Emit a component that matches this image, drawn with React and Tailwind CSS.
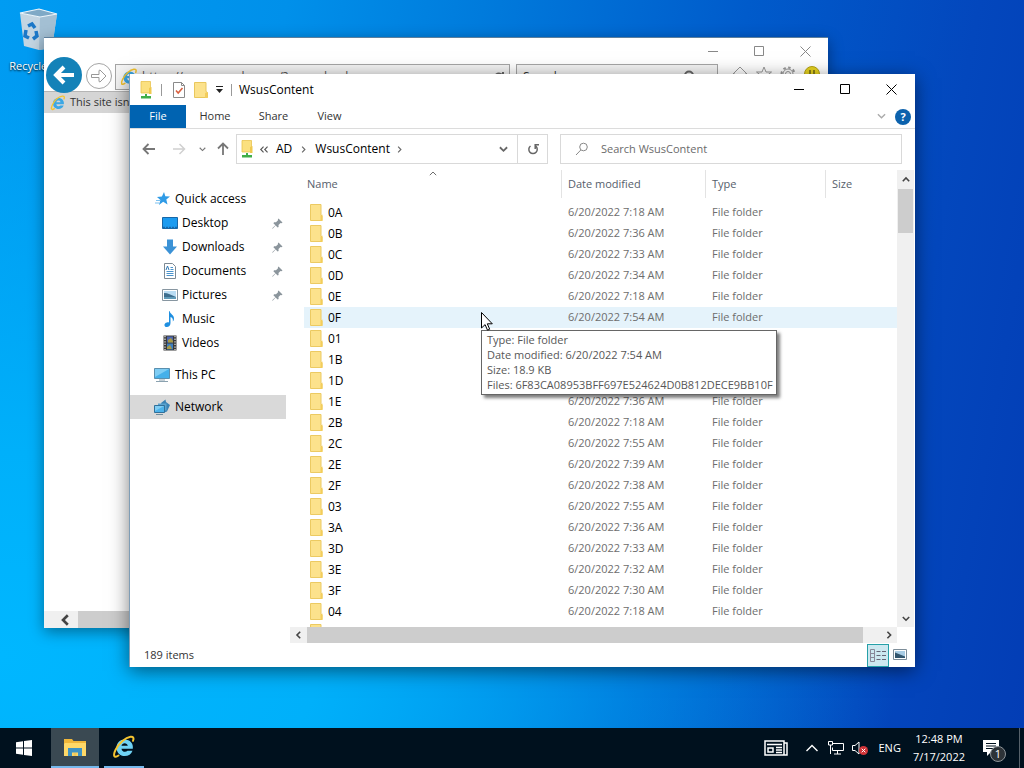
import React from 'react'

const rows = [
  ['0A', '7:18'],
  ['0B', '7:36'],
  ['0C', '7:33'],
  ['0D', '7:34'],
  ['0E', '7:18'],
  ['0F', '7:54'],
  ['01', '7:36'],
  ['1B', '7:33'],
  ['1D', '7:55'],
  ['1E', '7:36'],
  ['2B', '7:18'],
  ['2C', '7:55'],
  ['2E', '7:39'],
  ['2F', '7:38'],
  ['03', '7:55'],
  ['3A', '7:36'],
  ['3D', '7:33'],
  ['3E', '7:32'],
  ['3F', '7:30'],
  ['04', '7:18'],
  ['4A', '7:36'],
]

const quickLinks = [
  { name: 'Desktop', icon: DesktopIcon, pinned: true },
  { name: 'Downloads', icon: DownloadsIcon, pinned: true },
  { name: 'Documents', icon: DocumentsIcon, pinned: true },
  { name: 'Pictures', icon: PicturesIcon, pinned: true },
  { name: 'Music', icon: MusicIcon },
  { name: 'Videos', icon: VideosIcon },
]

/* ---------- Icons ---------- */

function Chevron({ dir = 'down', className = 'w-2 h-2', width = 1.6 }) {
  const paths = {
    down: 'M1 2.5 5 6.5 9 2.5',
    up: 'M1 6.5 5 2.5 9 6.5',
    left: 'M6.5 1 2.5 5 6.5 9',
    right: 'M3 1 7 5 3 9',
  }
  return (
    <svg className={className} viewBox="0 0 10 10" fill="none" stroke="currentColor" strokeWidth={width}>
      <path d={paths[dir]} />
    </svg>
  )
}

function FolderIcon() {
  return (
    <svg className="w-4 h-[18px] shrink-0" viewBox="0 0 16 18">
      <path d="M2.500.5h10.500v10.500l1 1v4.500H2.500z" fill="#fce28c" stroke="#ecca62" strokeWidth="1" />
      <path d="M12.500 11.500l2-1V17h-2z" fill="#f3cd5b" />
    </svg>
  )
}

function NetFolderIcon() {
  return (
    <svg className="w-4 h-[18px] shrink-0" viewBox="0 0 16 18">
      <path d="M3 .5h9.500V12H3z" fill="#fbe07f" stroke="#e8c34f" strokeWidth=".8" />
      <path d="M11 7l2.500-1v7H11z" fill="#f0c94f" />
      <path d="M7 13h2v2h4v2.500H3V15h4z" fill="#3fae49" />
    </svg>
  )
}

function BigFolderIcon() {
  return (
    <svg className="w-4 h-[18px] shrink-0" viewBox="0 0 16 18">
      <path d="M1.5 1.5h11.500v9l1.5 1v5H1.5z" fill="#fce28c" stroke="#e9c75c" />
      <path d="M12 12l2.500-1v6H12z" fill="#f3cd5b" />
    </svg>
  )
}

function CheckDocIcon() {
  return (
    <svg className="w-4 h-4 shrink-0" viewBox="0 0 16 16" fill="none">
      <path d="M2.5.5h8l3 3v12h-11z" fill="#fff" stroke="#8a8a8a" />
      <path d="M10.500.5v3h3" stroke="#8a8a8a" />
      <path d="M5 8.500l2.200 2.500L11.500 6" stroke="#d9603f" strokeWidth="1.6" />
    </svg>
  )
}

function StarIcon() {
  return (
    <svg className="w-4 h-4" viewBox="0 0 16 16">
      <path d="M9 1l1.300 4.300 4.700.2-3.700 3.100 1.200 4.900-4.300-2.700-4.300 3.200 1.500-4.900L2 5.900l4.900-.4z" fill="#2f9be6" />
      <path d="M1 9.500h4M0 12h4" stroke="#7cc1ef" strokeWidth="1" />
    </svg>
  )
}

function DesktopIcon() {
  return (
    <svg className="w-4 h-4" viewBox="0 0 16 16">
      <path d="M.5 2.500h15v11H.5z" fill="#1b9bf0" stroke="#1767a8" />
      <path d="M1 12.500h14" stroke="#1767a8" strokeWidth="1.500" strokeDasharray="2 1" />
    </svg>
  )
}

function DownloadsIcon() {
  return (
    <svg className="w-4 h-4" viewBox="0 0 16 16">
      <path d="M5 .5h6v7h4L8 15.500 1 7.500h4z" fill="#3b92d6" />
    </svg>
  )
}

function DocumentsIcon() {
  return (
    <svg className="w-4 h-4" viewBox="0 0 16 16" fill="none">
      <path d="M2.500.5h8l3 3v12h-11z" fill="#fff" stroke="#7d8a94" />
      <path d="M8.500 4.500H11M8.500 6.500h3M4.500 8.500h7M4.500 10.500h7M4.500 12.500h7" stroke="#4a93cc" />
      <path d="M4 7l1.500-4L7 7" stroke="#2d78b5" />
    </svg>
  )
}

function PicturesIcon() {
  return (
    <svg className="w-4 h-4" viewBox="0 0 16 16">
      <path d="M.5 2.500h15v11H.5z" fill="#fff" stroke="#8796a1" />
      <path d="M2 4h12v8H2z" fill="#b9dcf3" />
      <path d="M2 6c4 0 7 2 12 4v2H2z" fill="#3d6e8e" />
      <path d="M2 10h12v2H2z" fill="#5f9ab8" />
    </svg>
  )
}

function MusicIcon() {
  return (
    <svg className="w-4 h-4" viewBox="0 0 16 16">
      <path d="M7.500 0c.5 3 5 4 4.500 8-.2 1.500-.7 2-1.200 2.500.6-3-1-4-2.300-4.500V12c0 2.500-1.700 4-3.700 4-3 0-3.300-4 .2-4.600 1-.2 1.700 0 2 .2V0z" fill="#1f8fe0" />
    </svg>
  )
}

function VideosIcon() {
  return (
    <svg className="w-4 h-4" viewBox="0 0 16 16">
      <path d="M1.500.5h13v15h-13z" fill="#3a3a3a" />
      <path d="M3 1v14M13 1v14" stroke="#e8e8e8" strokeWidth="1.200" strokeDasharray="1.300 1.300" />
      <path d="M5 1.500h6v6H5z" fill="#4c66b0" />
      <path d="M5 8.500h6v6H5z" fill="#3f7fbf" />
      <path d="M6 5l3-2 2 3v1.500H6zM5 12l3-2 2 4H5z" fill="#a99b45" />
    </svg>
  )
}

function PcIcon() {
  return (
    <svg className="w-4 h-4" viewBox="0 0 16 16">
      <path d="M.5 1.500h15v10H.5z" fill="#45b0ea" stroke="#5a8fae" />
      <path d="M1 2h14L1 10z" fill="#7fcdf4" />
      <path d="M2 14.500h12M5 13h6" stroke="#8ba2b0" strokeWidth="1" />
    </svg>
  )
}

function NetworkIcon() {
  return (
    <svg className="w-4 h-4" viewBox="0 0 16 16">
      <path d="M7 4l4.500-3.500L12 3l4 3-3 6.500-3 1z" fill="#3a83b5" />
      <path d="M4 4.500h8.500v7H10V6H4z" fill="#5ba3cf" />
      <path d="M.5 6.500h10v7H.5z" fill="#4cb2ea" stroke="#31709a" />
      <path d="M1 7h9l-9 5z" fill="#80cdf3" />
      <path d="M2 15.500h7" stroke="#6d8b9c" />
    </svg>
  )
}

function PinIcon() {
  return (
    <svg className="w-[11px] h-[11px]" viewBox="0 0 11 11">
      <path d="M6.500.5l4 4-1 .7-1-.1-2 2 .1 1.900-1 .6-2-2L.7 10.800l-.5-.5L3.400 7.200l-2-2 .7-1 1.900.1 2-2-.1-1z" fill="#8b959c" />
    </svg>
  )
}

function SearchIcon() {
  return (
    <svg className="w-[14px] h-[14px] shrink-0" viewBox="0 0 14 14" fill="none" stroke="#888">
      <circle cx="8.500" cy="5" r="3.800" />
      <path d="M5.800 8 1 13" />
    </svg>
  )
}

function IeIcon({ className, color = '#3ba7e5' }) {
  return (
    <svg className={className} viewBox="0 0 24 24" fill="none">
      <path
        d="M12.800 4.500C8 4.500 4.500 8 4.500 12.700s3.500 8.300 8.300 8.300c3.600 0 6.600-1.900 7.700-5.300h-5c-1.700 2-5.600 1.400-6-2h11.300c.8-5.200-2.800-9.200-8-9.200zM9.500 10.700c.6-3.400 5.800-3.400 6.300 0z"
        fill={color}
        fillRule="evenodd"
      />
      <path d="M6.500 20.500c-4.500 3-5.700.3-3-5.500C7 8 13.500 2.500 18.500 1.800c3-.3 3.700 1.200 2.500 4" stroke="#f4c430" strokeWidth="2" strokeLinecap="round" />
    </svg>
  )
}

function RecycleBinIcon() {
  return (
    <svg className="w-10 h-[44px]" viewBox="0 0 40 44">
      <path d="M2 5l20 4 17-3-5 34-13 2-15-4z" fill="#c3d5e2" />
      <path d="M22 9l17-3-5 34-13 2z" fill="#a3bfd3" />
      <path d="M2 5l19-4 18 5-17 3z" fill="#7fa9c6" stroke="#eef5fa" strokeWidth="1.200" />
      <path d="M10 18l4-2 3 4M18 23l1 5-4 3M11 30l-4-2 1-6" stroke="#1c78c8" strokeWidth="3.500" fill="none" />
    </svg>
  )
}

function WindowButtons({ className, names }) {
  return (
    <div className={className}>
      <button aria-label={`Minimize ${names}`} className="w-[46px] h-7 flex items-center justify-center">
        <svg className="w-[11px] h-[11px]" viewBox="0 0 11 11" stroke="currentColor"><path d="M0 5.500h10" /></svg>
      </button>
      <button aria-label={`Maximize ${names}`} className="w-[46px] h-7 flex items-center justify-center">
        <svg className="w-[11px] h-[11px]" viewBox="0 0 11 11" stroke="currentColor" fill="none"><path d="M.5.5h9v9h-9z" /></svg>
      </button>
      <button aria-label={`Close ${names}`} className="w-[46px] h-7 flex items-center justify-center">
        <svg className="w-[11px] h-[11px]" viewBox="0 0 11 11" stroke="currentColor"><path d="M.5.5l10 10M10.500.5l-10 10" /></svg>
      </button>
    </div>
  )
}

/* ---------- Internet Explorer window ---------- */

function BrowserWindow() {
  return (
    <section className="absolute left-[44px] right-[196px] top-[37px] bottom-[100px] flex flex-col bg-white border-t border-[#5d7f9c] shadow-[0_4px_14px_rgba(0,0,0,0.4)] overflow-hidden">
      <WindowButtons names="browser" className="flex items-center justify-end text-[#888] h-[26px] shrink-0" />
      <div className="relative flex items-start h-[27px] shrink-0 pl-[71px] pr-2 gap-[6px]">
        <button aria-label="Back" className="absolute left-[2px] -top-[7px] w-9 h-9 rounded-full bg-[#1482b8] flex items-center justify-center">
          <svg className="w-[22px] h-[20px]" viewBox="0 0 22 20" fill="none" stroke="#fff" strokeWidth="4">
            <path d="M21 10H4M11 2l-8 8 8 8" />
          </svg>
        </button>
        <button aria-label="Forward" className="absolute left-[42px] -top-[1px] w-[26px] h-[26px] rounded-full border border-[#a5a5a5] flex items-center justify-center">
          <svg className="w-4 h-[14px]" viewBox="0 0 16 14" fill="none" stroke="#999">
            <path d="M.5 5.500H8v-4L9 1l6 6-6 6-1-.5v-4H.5z" />
          </svg>
        </button>
        <div className="flex-1 h-[26px] flex items-center border border-[#a5a5a5] bg-[#f4f4f4] px-1 gap-1 text-[#555]">
          <IeIcon className="w-[18px] h-[18px] shrink-0" />
          <input aria-label="Address" defaultValue="https://www.google.com/?gws_rd=ssl" className="flex-1 min-w-0 bg-transparent text-[12px] outline-none" />
          <svg className="w-3 h-3 shrink-0" viewBox="0 0 12 12" fill="none" stroke="#666" strokeWidth="2"><path d="M10 1v4H6M10 5a4.500 4.500 0 1 0 0 4" /></svg>
        </div>
        <div className="w-[202px] h-[26px] flex items-center border border-[#a5a5a5] bg-[#f4f4f4] px-[6px] text-[#333]">
          <input aria-label="Web search" defaultValue="Search..." className="flex-1 min-w-0 bg-transparent text-[12px] outline-none" />
          <svg className="w-[14px] h-[14px] mr-4 shrink-0" viewBox="0 0 14 14" fill="none" stroke="#666" strokeWidth="2"><circle cx="8" cy="5.500" r="4" /><path d="M5 9l-4 4" /></svg>
        </div>
        <div className="flex gap-2 pl-2 pt-[2px]">
          <svg className="w-4 h-4" viewBox="0 0 16 16" fill="none" stroke="#999"><path d="M1 8l7-7 7 7h-2v7H3V8z" /></svg>
          <svg className="w-4 h-4" viewBox="0 0 16 16" fill="none" stroke="#999"><path d="M8 1l2 5h5.500L11 9.500l2 5.500-5-3.500L3 15l2-5.500L.5 6H6z" /></svg>
          <svg className="w-4 h-4" viewBox="0 0 16 16" fill="none" stroke="#999"><circle cx="8" cy="8" r="2.500" /><circle cx="8" cy="8" r="5" /><circle cx="8" cy="8" r="6.500" strokeDasharray="2.500 2.500" strokeWidth="2" /></svg>
          <svg className="w-4 h-4" viewBox="0 0 16 16"><circle cx="8" cy="8" r="7.500" fill="#e8d41f" stroke="#b3a113" /><path d="M6 4v4M10 4v4" stroke="#6d6414" strokeWidth="1.500" /></svg>
        </div>
      </div>
      <div className="flex h-[22px] shrink-0">
        <div className="w-[200px] bg-[#d5d5d5] border-t border-[#b5b5b5] flex items-center gap-1 pl-[6px] text-[11px] text-[#333]">
          <IeIcon className="w-4 h-4 shrink-0" />
          <span>This site isn't secure</span>
        </div>
      </div>
      <div className="flex-1"></div>
      <div className="flex h-[17px] shrink-0 bg-[#f0f0f0] text-[#444]">
        <button aria-label="Scroll browser left" className="w-[34px] flex items-center justify-end pr-[6px]">
          <Chevron dir="left" className="w-3 h-3" width={2.2} />
        </button>
        <div className="flex-1 bg-[#cdcdcd]"></div>
      </div>
    </section>
  )
}

/* ---------- File Explorer window ---------- */

function NavPane() {
  return (
    <nav className="w-[156px] shrink-0 pt-[17px] text-black">
      <a href="#quick" className="flex items-center h-6 pl-[25px] gap-[4px]">
        <StarIcon />
        <span>Quick access</span>
      </a>
      {quickLinks.map((link) => (
        <a key={link.name} href="#folder" className="flex items-center h-6 pl-8 pr-[3px] gap-[4px]">
          <link.icon />
          <span className="flex-1">{link.name}</span>
          {link.pinned && <PinIcon />}
        </a>
      ))}
      <a href="#pc" className="flex items-center h-6 mt-2 pl-6 gap-[5px]">
        <PcIcon />
        <span>This PC</span>
      </a>
      <a href="#network" className="flex items-center h-6 mt-2 pl-6 gap-[5px] bg-[#d9d9d9]">
        <NetworkIcon />
        <span>Network</span>
      </a>
    </nav>
  )
}

function FileTable() {
  return (
    <table className="w-full table-fixed border-collapse text-left">
      <colgroup>
        <col />
        <col className="w-36" />
        <col className="w-[120px]" />
        <col className="w-[72px]" />
      </colgroup>
      <thead>
        <tr className="h-8 align-top text-[11px] text-[#56606b]">
          <th className="p-0 font-normal">
            <div className="relative h-7 leading-7 pl-[3px]">
              Name
              <span className="absolute inset-x-0 top-0 flex justify-center text-[#666]"><Chevron dir="up" width={1.2} /></span>
            </div>
          </th>
          <th className="p-0 font-normal"><div className="h-7 leading-7 border-l border-[#e3e3e3] pl-[6px]">Date modified</div></th>
          <th className="p-0 font-normal"><div className="h-7 leading-7 border-l border-[#e3e3e3] pl-[6px]">Type</div></th>
          <th className="p-0 font-normal"><div className="h-7 leading-7 border-l border-[#e3e3e3] pl-[6px]">Size</div></th>
        </tr>
      </thead>
      <tbody>
        {rows.map(([name, time]) => (
          <tr key={name} className={name === '0F' ? 'h-[21px] bg-[#e5f3fb]' : 'h-[21px]'}>
            <td className="p-0">
              <div className="flex items-center h-[21px] gap-1 pl-1 text-black">
                <FolderIcon />
                <span>{name}</span>
              </div>
            </td>
            <td className="p-0 pl-[7px] text-[11px] text-[#6d6d6d]">6/20/2022 {time} AM</td>
            <td className="p-0 pl-[7px] text-[11px] text-[#6d6d6d]">File folder</td>
            <td className="p-0"></td>
          </tr>
        ))}
      </tbody>
    </table>
  )
}

function ExplorerWindow() {
  return (
    <section className="absolute left-[129px] right-[109px] top-[74px] bottom-[61px] flex flex-col bg-white border-l border-[#7f9db5] text-[12px] shadow-[0_4px_18px_rgba(0,0,0,0.5)]">
      {/* Title bar */}
      <header className="flex items-start h-[31px] shrink-0">
        <div className="flex items-center h-[31px] pl-2">
          <NetFolderIcon />
          <span className="w-px h-3 bg-[#999] ml-[7px] mr-[9px]"></span>
          <CheckDocIcon />
          <span className="ml-[6px]"><BigFolderIcon /></span>
          <svg className="w-[7px] h-[7px] ml-[7px]" viewBox="0 0 7 7"><path d="M0 0h7v1H0zM0 3h7L3.500 7z" fill="#222" /></svg>
          <span className="w-px h-3 bg-[#999] ml-2 mr-[7px]"></span>
          <h1>WsusContent</h1>
        </div>
        <WindowButtons names="explorer" className="flex flex-1 justify-end text-black pt-px pr-px" />
      </header>

      {/* Ribbon tabs */}
      <div className="flex h-6 shrink-0 border-b border-[#dcdcdc] text-[11px] text-[#333]">
        <button className="w-14 bg-[#0063b1] text-white">File</button>
        <button className="w-[58px]">Home</button>
        <button className="w-[59px]">Share</button>
        <button className="w-[53px]">View</button>
        <div className="flex flex-1 items-center justify-end gap-[9px] pr-1">
          <Chevron className="w-[9px] h-[9px] text-[#aaa]" width={1.5} />
          <button aria-label="Help" className="w-4 h-4 rounded-full bg-[#0c62ad] text-white font-bold leading-4">?</button>
        </div>
      </div>

      {/* Address bar */}
      <div className="flex items-center h-10 shrink-0 pr-[13px]">
        <div className="w-[106px] shrink-0 flex items-center pl-3 text-[#777]">
          <svg className="w-[14px] h-3" viewBox="0 0 14 12" fill="none" stroke="currentColor" strokeWidth="1.800"><path d="M13 6H2M6.500 1l-5 5 5 5" /></svg>
          <svg className="w-[14px] h-3 ml-4 text-[#d0d0d0]" viewBox="0 0 14 12" fill="none" stroke="currentColor" strokeWidth="1.500"><path d="M1 6h11M7.500 1l5 5-5 5" /></svg>
          <Chevron className="w-[7px] h-[7px] ml-[13px]" />
          <svg className="w-3 h-[14px] ml-[11px]" viewBox="0 0 12 14" fill="none" stroke="currentColor" strokeWidth="1.800"><path d="M6 13V2M1 6.500l5-5 5 5" /></svg>
        </div>
        <div className="flex items-center h-[30px] flex-[308] min-w-0 border border-[#d9d9d9] pl-[2px] text-black">
          <NetFolderIcon />
          <span className="flex ml-1 text-[#555]">
            <Chevron dir="left" className="w-[7px] h-[7px] -mr-[3px]" />
            <Chevron dir="left" className="w-[7px] h-[7px]" />
          </span>
          <button className="ml-[6px]">AD</button>
          <Chevron dir="right" className="w-[7px] h-[7px] ml-2 text-[#666]" />
          <button className="ml-2">WsusContent</button>
          <Chevron dir="right" className="w-[7px] h-[7px] ml-[6px] text-[#666]" />
          <div className="flex-1"></div>
          <button aria-label="Previous locations" className="w-7 h-full flex items-center justify-center text-[#666]">
            <Chevron className="w-[9px] h-[9px]" width={2} />
          </button>
          <button aria-label="Refresh" className="w-[30px] h-full flex items-center justify-center border-l border-[#d9d9d9]">
            <svg className="w-3 h-3" viewBox="0 0 12 12" fill="none" stroke="#666" strokeWidth="1.500"><path d="M3.500 3A4.200 4.200 0 1 0 8.700 3.100M8.200 6V1.700H12" /></svg>
          </button>
        </div>
        <label className="flex items-center h-[30px] flex-[326] min-w-0 ml-3 border border-[#d9d9d9] pl-[14px] gap-3">
          <SearchIcon />
          <input aria-label="Search WsusContent" placeholder="Search WsusContent" className="flex-1 min-w-0 bg-transparent outline-none text-[11px] placeholder:text-[#6b6b6b]" />
        </label>
      </div>

      {/* Navigation and file list */}
      <div className="flex flex-1 min-h-0 pt-px">
        <NavPane />
        <div className="flex flex-col flex-1 min-w-0 pl-1">
          <div className="flex flex-1 min-h-0">
            <div className="flex-1 min-w-0 overflow-hidden pl-[14px]">
              <FileTable />
            </div>
            <div className="w-[17px] shrink-0 mr-px flex flex-col bg-[#f0f0f0] text-[#444]">
              <button aria-label="Scroll up" className="h-[19px] shrink-0 flex items-center justify-center"><Chevron dir="up" width={2} /></button>
              <div className="h-11 bg-[#cdcdcd] mx-px"></div>
              <div className="flex-1"></div>
              <button aria-label="Scroll down" className="h-[17px] shrink-0 flex items-center justify-center"><Chevron width={2} /></button>
            </div>
          </div>
          <div className="flex h-4 shrink-0 mr-[18px] bg-[#f0f0f0] text-[#444]">
            <button aria-label="Scroll left" className="w-[17px] flex items-center justify-center"><Chevron dir="left" width={2} /></button>
            <div className="flex-1 bg-[#cdcdcd]"></div>
            <div className="w-[17px]"></div>
            <button aria-label="Scroll right" className="w-[17px] flex items-center justify-center"><Chevron dir="right" width={2} /></button>
          </div>
        </div>
      </div>

      {/* Status bar */}
      <footer className="flex items-center justify-between h-6 shrink-0 pl-[14px] pr-2 text-[11px] text-[#333]">
        <span>189 items</span>
        <div className="flex items-center gap-1">
          <button aria-label="Details view" className="w-[22px] h-[23px] border border-[#26a0a8] bg-[#cce8f0] flex items-center justify-center">
            <svg className="w-4 h-[13px]" viewBox="0 0 16 13" fill="none" stroke="#667">
              <path d="M.5.500h4v12h-4zM.5 4.500h4M.5 8.500h4" stroke="#889" />
              <path d="M6.500 2.500h4M12 2.500h4M6.500 6.500h4M12 6.500h4M6.500 10.500h4M12 10.500h4" />
            </svg>
          </button>
          <button aria-label="Thumbnails view" className="flex">
            <svg className="w-[14px] h-[12px]" viewBox="0 0 14 12"><path d="M.5.5h13v10H.5z" fill="#fff" stroke="#7c8d99" /><path d="M2 2h10v7H2z" fill="#a9cde5" /><path d="M2 3.500l10 4V9H2z" fill="#33566e" /></svg>
          </button>
        </div>
      </footer>

      {/* Hover tooltip and mouse pointer */}
      <div role="tooltip" className="absolute left-[351px] top-[256px] border border-[#666] bg-white pl-[5px] pr-[3px] pt-px pb-[2px] text-[11px] leading-[15px] text-[#575757] whitespace-nowrap shadow-[3px_3px_3px_rgba(0,0,0,0.5)]">
        <p>Type: File folder</p>
        <p>Date modified: 6/20/2022 7:54 AM</p>
        <p>Size: 18.9 KB</p>
        <p>Files: 6F83CA08953BFF697E524624D0B812DECE9BB10F</p>
      </div>
      <svg className="absolute left-[351px] top-[238px] w-3 h-[19px]" viewBox="0 0 12 19">
        <path d="M.5.500v15.500l3.600-3.400 2.400 5.600 2.200-1-2.400-5.400h5z" fill="#fff" stroke="#000" />
      </svg>
    </section>
  )
}

/* ---------- Taskbar ---------- */

function Taskbar() {
  return (
    <footer className="relative flex items-stretch h-10 shrink-0 bg-[#00111e] text-white text-[12px]">
      <button aria-label="Start" className="w-[51px] flex items-center justify-center pr-[3px]">
        <svg className="w-4 h-4" viewBox="0 0 16 16" fill="#fff"><path d="M0 2.200l7-1v6.300H0zM8 1l8-1v7.500H8zM0 8.500h7v6.300l-7-1zM8 8.500h8V16l-8-1z" /></svg>
      </button>
      <button aria-label="File Explorer" className="w-12 flex items-center justify-center bg-[#3a4952] border-b-2 border-[#76b9ed]">
        <svg className="w-[22px] h-[19px]" viewBox="0 0 22 19">
          <path d="M0 1h8l1.500 2H22v15H0z" fill="#f0b73a" />
          <path d="M1 5h21v13H0V6z" fill="#ffd968" />
          <path d="M4 10h14v8h-4v-3.500H8V18H4z" fill="#3f93c4" />
          <path d="M9.500 15h3v3h-3z" fill="#f3c95a" />
        </svg>
      </button>
      <button aria-label="Internet Explorer" className="w-10 ml-[5px] flex items-center justify-center border-b-2 border-[#76b9ed]">
        <IeIcon className="w-6 h-6" color="#6fd3f5" />
      </button>
      <div className="flex flex-1 items-center justify-end">
        <svg className="w-6 h-4" viewBox="0 0 24 16" fill="none" stroke="#fff" strokeWidth="1.500">
          <path d="M1 1h19v14H1zM20 3h3v12h-4M3 4.500h15M12 7.500h6M12 10h6M12 12.500h6" />
          <path d="M4 8h5v4H4z" />
        </svg>
        <svg className="w-3 h-2 ml-[18px]" viewBox="0 0 12 8" fill="none" stroke="#fff" strokeWidth="1.400"><path d="M.5 7 6 1.500 11.500 7" /></svg>
        <svg className="w-4 h-[14px] ml-[10px]" viewBox="0 0 16 14" fill="none" stroke="#fff"><path d="M5 2.500h10.500v7H4.500v-3M9.500 9.500v3.500M6 13h7M.5.500h4v3.500h-4zM2.500 4v9" /></svg>
        <svg className="w-4 h-[14px] ml-2" viewBox="0 0 16 14" fill="none">
          <path d="M.5 4.500H3L7 1v12L3 9.500H.5z" stroke="#fff" />
          <circle cx="11.500" cy="9.500" r="4.500" fill="#d13438" />
          <path d="M9.700 7.700l3.600 3.600M13.300 7.700l-3.600 3.600" stroke="#fff" />
        </svg>
        <span className="ml-[10px] text-[11px]">ENG</span>
        <div className="ml-3 text-center text-[11px] leading-[18px]">
          <p>12:48 PM</p>
          <p>7/17/2022</p>
        </div>
        <button aria-label="1 new notification" className="relative ml-[18px] mr-5 w-4 h-4">
          <svg className="w-4 h-4" viewBox="0 0 16 16"><path d="M0 0h16v12H8l-4 4v-4H0z" fill="#fff" /><path d="M3 3.500h10M3 6h10M3 8.500h7" stroke="#00111e" /></svg>
          <span className="absolute left-[7px] top-[6px] w-4 h-4 rounded-full bg-[#2d3338] border border-[#8d9499] text-[11px] leading-[14px] text-center">1</span>
        </button>
        <span className="w-px h-full bg-[#56616a] mr-1"></span>
      </div>
    </footer>
  )
}

export default function App() {
  return (
    <div className="h-screen flex flex-col overflow-hidden font-['Open_Sans','Noto_Sans',sans-serif]">
      <main className="relative flex-1 overflow-hidden bg-[linear-gradient(100deg,#009cf2_0%,#0090ea_25%,#007bdc_42%,#005bcb_65%,#0347bd_85%,#033db5_100%)]">
        <div className="absolute inset-0 bg-[radial-gradient(ellipse_at_0%_90%,#00b7ff_0%,#00b0fa_22%,transparent_62%)]"></div>
        <div className="absolute left-0 top-[8px] w-[76px] flex flex-col items-center gap-[6px] text-white text-[11px] [text-shadow:0_1px_2px_#000]">
          <RecycleBinIcon />
          <span>Recycle Bin</span>
        </div>
        <BrowserWindow />
        <ExplorerWindow />
      </main>
      <Taskbar />
    </div>
  )
}
